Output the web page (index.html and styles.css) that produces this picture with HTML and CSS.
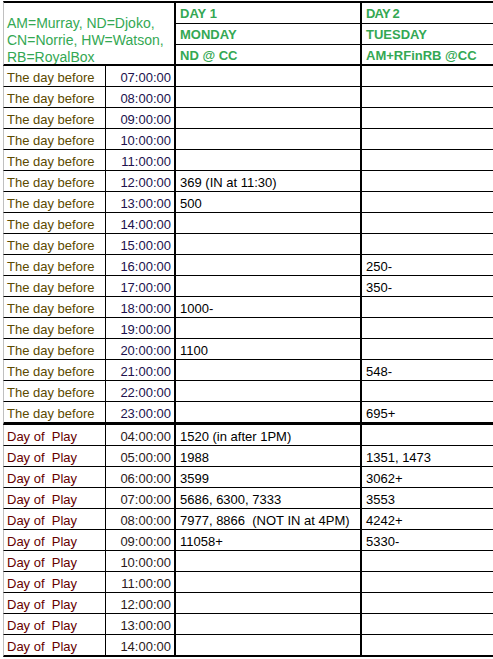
FILE: index.html
```html
<!DOCTYPE html>
<html>
<head>
<meta charset="utf-8">
<link rel="stylesheet" href="styles.css">
</head>
<body>
<table class="sheet">
  <colgroup>
    <col class="c-label"><col class="c-time"><col class="c-day1"><col class="c-day2">
  </colgroup>
  <thead>
    <tr class="h-row first">
      <th class="legend" colspan="2" rowspan="3"><div class="legend-text">AM=Murray, ND=Djoko,<br>CN=Norrie, HW=Watson,<br>RB=RoyalBox</div></th>
      <th class="day1">DAY 1</th>
      <th class="day2 narrow">DAY 2</th>
    </tr>
    <tr class="h-row">
      <th class="day1">MONDAY</th>
      <th class="day2">TUESDAY</th>
    </tr>
    <tr class="h-row last">
      <th class="day1">ND @ CC</th>
      <th class="day2">AM+RFinRB @CC</th>
    </tr>
  </thead>
  <tbody class="before">
    <tr><td class="label">The day before</td><td class="time">07:00:00</td><td class="day1"></td><td class="day2"></td></tr>
    <tr><td class="label">The day before</td><td class="time">08:00:00</td><td class="day1"></td><td class="day2"></td></tr>
    <tr><td class="label">The day before</td><td class="time">09:00:00</td><td class="day1"></td><td class="day2"></td></tr>
    <tr><td class="label">The day before</td><td class="time">10:00:00</td><td class="day1"></td><td class="day2"></td></tr>
    <tr><td class="label">The day before</td><td class="time">11:00:00</td><td class="day1"></td><td class="day2"></td></tr>
    <tr><td class="label">The day before</td><td class="time">12:00:00</td><td class="day1">369 (IN at 11:30)</td><td class="day2"></td></tr>
    <tr><td class="label">The day before</td><td class="time">13:00:00</td><td class="day1">500</td><td class="day2"></td></tr>
    <tr><td class="label">The day before</td><td class="time">14:00:00</td><td class="day1"></td><td class="day2"></td></tr>
    <tr><td class="label">The day before</td><td class="time">15:00:00</td><td class="day1"></td><td class="day2"></td></tr>
    <tr><td class="label">The day before</td><td class="time">16:00:00</td><td class="day1"></td><td class="day2">250-</td></tr>
    <tr><td class="label">The day before</td><td class="time">17:00:00</td><td class="day1"></td><td class="day2">350-</td></tr>
    <tr><td class="label">The day before</td><td class="time">18:00:00</td><td class="day1">1000-</td><td class="day2"></td></tr>
    <tr><td class="label">The day before</td><td class="time">19:00:00</td><td class="day1"></td><td class="day2"></td></tr>
    <tr><td class="label">The day before</td><td class="time">20:00:00</td><td class="day1">1100</td><td class="day2"></td></tr>
    <tr><td class="label">The day before</td><td class="time">21:00:00</td><td class="day1"></td><td class="day2">548-</td></tr>
    <tr><td class="label">The day before</td><td class="time">22:00:00</td><td class="day1"></td><td class="day2"></td></tr>
    <tr class="section-end"><td class="label">The day before</td><td class="time">23:00:00</td><td class="day1"></td><td class="day2">695+</td></tr>
  </tbody>
  <tbody class="play">
    <tr><td class="label">Day of&nbsp; Play</td><td class="time">04:00:00</td><td class="day1">1520 (in after 1PM)</td><td class="day2"></td></tr>
    <tr><td class="label">Day of&nbsp; Play</td><td class="time">05:00:00</td><td class="day1">1988</td><td class="day2">1351, 1473</td></tr>
    <tr><td class="label">Day of&nbsp; Play</td><td class="time">06:00:00</td><td class="day1">3599</td><td class="day2">3062+</td></tr>
    <tr><td class="label">Day of&nbsp; Play</td><td class="time">07:00:00</td><td class="day1">5686, 6300, 7333</td><td class="day2">3553</td></tr>
    <tr><td class="label">Day of&nbsp; Play</td><td class="time">08:00:00</td><td class="day1">7977, 8866&nbsp; (NOT IN at 4PM)</td><td class="day2">4242+</td></tr>
    <tr><td class="label">Day of&nbsp; Play</td><td class="time">09:00:00</td><td class="day1">11058+</td><td class="day2">5330-</td></tr>
    <tr><td class="label">Day of&nbsp; Play</td><td class="time">10:00:00</td><td class="day1"></td><td class="day2"></td></tr>
    <tr><td class="label">Day of&nbsp; Play</td><td class="time">11:00:00</td><td class="day1"></td><td class="day2"></td></tr>
    <tr><td class="label">Day of&nbsp; Play</td><td class="time">12:00:00</td><td class="day1"></td><td class="day2"></td></tr>
    <tr><td class="label">Day of&nbsp; Play</td><td class="time">13:00:00</td><td class="day1"></td><td class="day2"></td></tr>
    <tr class="section-end"><td class="label">Day of&nbsp; Play</td><td class="time">14:00:00</td><td class="day1"></td><td class="day2"></td></tr>
  </tbody>
</table>
</body>
</html>
```

FILE: styles.css
```css
html, body {
  margin: 0;
  padding: 0;
  background: #ffffff;
}

body {
  padding-top: 1px;
  overflow: hidden;
}

.sheet {
  margin-left: 3px;
  border-collapse: separate;
  border-spacing: 0;
  table-layout: fixed;
  width: 490px;
  font-family: "Liberation Sans", Arial, sans-serif;
  font-size: 13px;
  color: #000000;
}

.c-label { width: 103px; }
.c-time { width: 70px; }
.c-day1 { width: 186px; }
.c-day2 { width: 131px; }

.sheet th,
.sheet td {
  padding: 4px 3px 0 3px;
  line-height: 16px;
  height: 16px;
  white-space: nowrap;
  overflow: hidden;
  text-align: left;
  vertical-align: top;
  border-bottom: 1px solid #000;
  box-sizing: content-box;
}

.sheet th {
  color: #34a853;
  font-weight: bold;
  padding-top: 2px;
  line-height: 18px;
  height: 18px;
}

.h-row.first th {
  border-top: 2px solid #000;
}

.h-row.last th {
  border-bottom: 2px solid #000;
  height: 17px;
  line-height: 17px;
}

.sheet .legend {
  font-weight: normal;
  font-size: 14px;
  line-height: 17px;
  height: auto;
  vertical-align: bottom;
  padding: 0 3px;
  border-left: 1px solid #c0c0c0;
  border-right: 2px solid #000;
  border-bottom: 2px solid #000;
  white-space: nowrap;
}

.legend-text {
  margin-bottom: -2px;
}

.sheet .day1 {
  border-right: 2px solid #000;
  padding-left: 4px;
}

.sheet .day2 {
  padding-left: 4px;
}

.narrow {
  letter-spacing: -0.8px;
}

.sheet .label {
  border-left: 1px solid #c0c0c0;
  border-right: 1px solid #000;
  padding-left: 3px;
}

.sheet .time {
  text-align: right;
  padding-right: 3px;
  border-right: 2px solid #000;
}

.before .label { color: #5c4a00; }
.before .time { color: #20124d; }
.play .label { color: #660000; }
.play .time { color: #2a1a1a; }

.sheet tr.section-end td {
  border-bottom: 3px solid #000;
}

.play tr.section-end td {
  border-bottom-width: 2px;
}
```
